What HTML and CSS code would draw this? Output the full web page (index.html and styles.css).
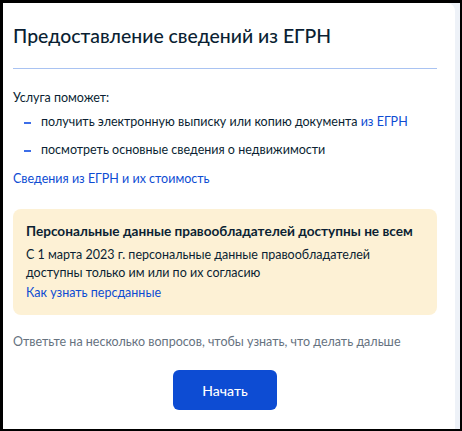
FILE: index.html
```html
<!DOCTYPE html>
<html>

<head>
    <title>Предоставление сведений из ЕГРН</title>
    <link rel="stylesheet" href="styles.css">
</head>

<body>
    <div class="frame">
        <div class="card">
            <h1>Предоставление сведений из ЕГРН</h1>
            <hr class="divider">

            <p class="lead">Услуга поможет:</p>
            <ul class="dash-list">
                <li>получить электронную выписку или копию документа <a href="#">из ЕГРН</a></li>
                <li>посмотреть основные сведения о недвижимости</li>
            </ul>

            <a class="link" href="#">Сведения из ЕГРН и их стоимость</a>

            <div class="notice">
                <h2>Персональные данные правообладателей доступны не всем</h2>
                <p>С 1 марта 2023 г. персональные данные правообладателей<br>доступны только им или по их согласию</p>
                <a href="#">Как узнать персданные</a>
            </div>

            <p class="hint">Ответьте на несколько вопросов, чтобы узнать, что делать дальше</p>

            <div class="actions">
                <button type="button">Начать</button>
            </div>
        </div>
    </div>
</body>

</html>
```

FILE: styles.css
```css
html,
body {
    margin: 0;
    height: 100%;
    background-color: #000;
}

body {
    font-family: Lato, 'Noto Sans', sans-serif;
    color: #0b1f33;
    overflow: hidden;
}

.frame {
    box-sizing: border-box;
    height: 100%;
    border: solid #000;
    border-width: 3px 2px 2px 3px;
    background-color: #eef2f8;
    padding-right: 5px;
}

.card {
    box-sizing: border-box;
    height: 100%;
    background-color: white;
    border-radius: 0 8px 0 0;
    padding: 20px 18px 0 10px;
}

h1 {
    margin: 0;
    font-size: 19.4px;
    font-weight: 500;
    line-height: 26px;
}

.divider {
    border: none;
    border-top: 1px solid #a9c3f2;
    margin: 19px 0 0 0;
}

.lead {
    margin: 20px 0 0 0;
    font-size: 12.5px;
    line-height: 18px;
}

.dash-list {
    list-style: none;
    margin: 6px 0 0 0;
    padding: 0;
    font-size: 12.5px;
    line-height: 18px;
}

.dash-list li {
    position: relative;
    padding-left: 28px;
    margin-bottom: 10px;
}

.dash-list li::before {
    content: "";
    position: absolute;
    left: 11px;
    top: 9px;
    width: 7px;
    height: 2px;
    background-color: #3d6ee8;
}

a {
    color: #0d4cd3;
    text-decoration: none;
}

.link {
    display: block;
    margin-top: 11px;
    font-size: 12.5px;
    line-height: 18px;
}

.notice {
    margin-top: 21px;
    padding: 12px 13px 13px 13px;
    background-color: #fdf1d5;
    border-radius: 8px;
    font-size: 12.5px;
    line-height: 18px;
}

.notice h2 {
    margin: 0 0 5px 0;
    font-size: 13.6px;
    font-weight: 700;
    line-height: 20px;
    white-space: nowrap;
}

.notice p {
    margin: 0;
}

.notice a {
    display: block;
    margin-top: 2px;
}

.hint {
    margin: 18px 0 0 0;
    font-size: 12.5px;
    line-height: 18px;
    color: #66727f;
}

.actions {
    margin-top: 19px;
    text-align: center;
}

button {
    width: 104px;
    height: 40px;
    border: none;
    border-radius: 6px;
    background-color: #0d4cd3;
    color: white;
    font-family: inherit;
    font-size: 14px;
    font-weight: 500;
    cursor: pointer;
}
```
